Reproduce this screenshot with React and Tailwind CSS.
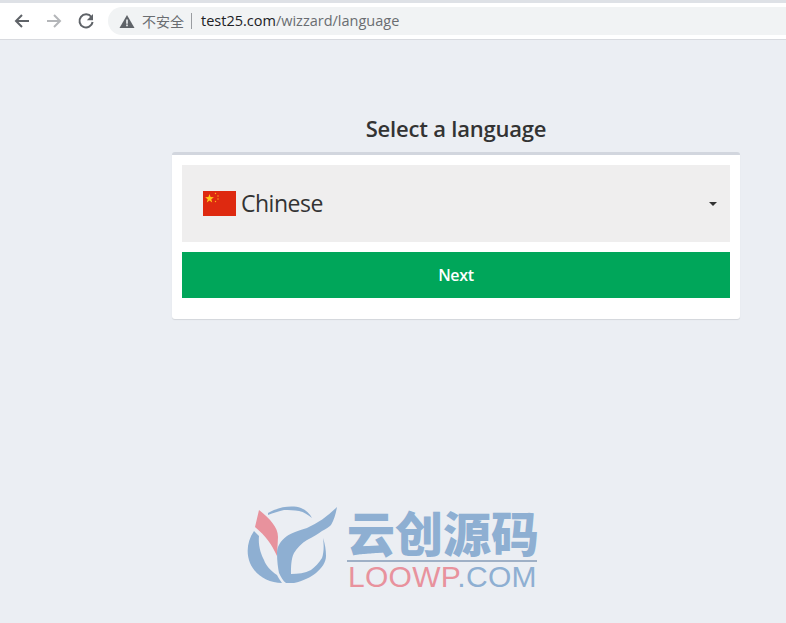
export default function App() {
  const sans = { fontFamily: '"Open Sans", sans-serif' };
  return (
    <div className="w-[786px] h-[623px] overflow-hidden bg-[#ebeef3] flex flex-col font-['Liberation_Sans',sans-serif]">
      <div className="h-[3px] bg-[#dee1e6] shrink-0" />
      <div className="h-[37px] shrink-0 bg-white border-b border-[#d8dadf] flex items-center">
        <div className="w-[108px] pl-[13px] flex items-center gap-[14px] shrink-0">
          <svg width="18" height="18" viewBox="0 0 18 18" fill="none" stroke="#5f6368" strokeWidth="2"><path d="M16 9H3M9 3L3 9l6 6" /></svg>
          <svg width="18" height="18" viewBox="0 0 18 18" fill="none" stroke="#b4b6b9" strokeWidth="2"><path d="M2 9h13M9 3l6 6-6 6" /></svg>
          <svg width="18" height="18" viewBox="0 0 18 18" fill="none" stroke="#5f6368" strokeWidth="2"><path d="M14.4 5A6.6 6.6 0 1 0 15.6 10" /><path d="M16 2v6.2H9.8z" fill="#5f6368" strokeWidth="0" /></svg>
        </div>
        <div className="flex-1 h-[28px] rounded-l-[14px] bg-[#f1f3f4] flex items-center pl-[11px]">
          <svg width="16" height="15" viewBox="0 0 16 15" className="shrink-0"><path d="M8 1l7.5 13H.5z" fill="#5f6368" /><path d="M7.2 5.5h1.6v4.2H7.2zM7.2 10.6h1.6v1.6H7.2z" fill="#f1f3f4" /></svg>
          <span className="ml-[7px] text-[14px] text-[#6a6d71] font-['Noto_Sans_CJK_SC',sans-serif] leading-none">不安全</span>
          <span className="ml-[7px] w-px h-[16px] bg-[#9a9da1]" />
          <span className="ml-[9px] text-[14.5px] leading-none" style={sans}>
            <span className="text-[#202124]">test25.com</span><span className="text-[#6a6d71]">/wizzard/language</span>
          </span>
        </div>
      </div>

      <div className="ml-[172px] w-[568px] flex flex-col" style={sans}>
        <h1 className="mt-[70px] mb-[6px] h-[36px] flex items-center justify-center text-[22px] font-semibold text-[#333] tracking-[-0.2px]">Select a language</h1>
        <div className="bg-white border-t-[3px] border-[#d2d6de] rounded-[3px] shadow-[0_1px_1px_rgba(0,0,0,0.1)] p-[10px] pb-[21px] flex flex-col gap-[10px]">
          <div className="h-[77px] bg-[#efeeee] flex items-center pl-[21px] pr-[13px]">
            <svg width="33" height="25" viewBox="0 0 33 25" className="shrink-0">
              <rect width="33" height="25" fill="#de2910" />
              <path d="M6.5 3l1.1 3.1 3.3.1-2.6 2 .9 3.2-2.7-1.9-2.7 1.9.9-3.2-2.6-2 3.3-.1z" fill="#ffc61a" />
              <circle cx="12.5" cy="2.5" r="0.7" fill="#ffb01a" />
              <circle cx="15" cy="5" r="0.7" fill="#ffb01a" />
              <circle cx="15" cy="8" r="0.7" fill="#ffb01a" />
              <circle cx="12.5" cy="10.5" r="0.7" fill="#ffb01a" />
            </svg>
            <span className="ml-[5px] text-[23px] text-[#333] tracking-[-0.5px] leading-none">Chinese</span>
            <span className="ml-auto w-0 h-0 border-x-[4px] border-x-transparent border-t-[4px] border-t-[#333]" />
          </div>
          <button className="h-[46px] bg-[#00a65a] text-white text-[16px] font-semibold tracking-[-0.3px]">Next</button>
        </div>
      </div>

      <div className="ml-[244px] mt-[184px] w-[296px] h-[90px] flex items-start">
        <svg width="100" height="90" viewBox="0 0 100 90" className="shrink-0">
          <path d="M10 28C3 38 2 50 6 60c5 12 18 20 32 20-3-4-4-6-5-8-6-4-11-9-13-15-3-6-6-14-5-24z" fill="#8eafd2" />
          <path d="M24 10C34 4 48 2 57 5c5 2 9 6 11 10-4-3-8-6-13-7-5-1-10-1-15-1-5 1-11 3-16 5z" fill="#8eafd2" />
          <path d="M15 7C26 16 34 24 34 34L33 53C28 42 22 33 11 24z" fill="#e8929d" />
          <path d="M93 4C84 13 74 20 63 25 54 28 47 30 43 33 36 38 33 44 33 50c0 8 1 15 2 20 2 4 4 8 7 10h8c9-2 17-6 22-10 6-5 10-11 10-17 0-6-1-12-3-18 1 7 1 14-1 20-3 5-7 9-11 12-6 3-13 4-20 4 0-7 0-15 3-21 3-5 8-10 13-13 6-3 11-6 15-9 4-2 7-4 9-6 3-5 5-12 6-18z" fill="#8eafd2" />
        </svg>
        <div className="ml-[3px] w-[190px] flex flex-col">
          <div className="h-[46px] mt-[5px] text-[48px] font-black leading-[46px] text-[#8eafd2] whitespace-nowrap font-['Noto_Sans_CJK_SC',sans-serif]">云创源码</div>
          <div className="h-[2px] mt-[6px] bg-[#9fb0c6]" />
          <div className="pl-[1px] mt-[1px] text-[30px] leading-[28px] tracking-[0.3px] whitespace-nowrap font-['Liberation_Sans',sans-serif]">
            <span className="text-[#e8929d]">LOOWP</span><span className="text-[#8eafd2]">.COM</span>
          </div>
        </div>
      </div>
    </div>
  );
}
